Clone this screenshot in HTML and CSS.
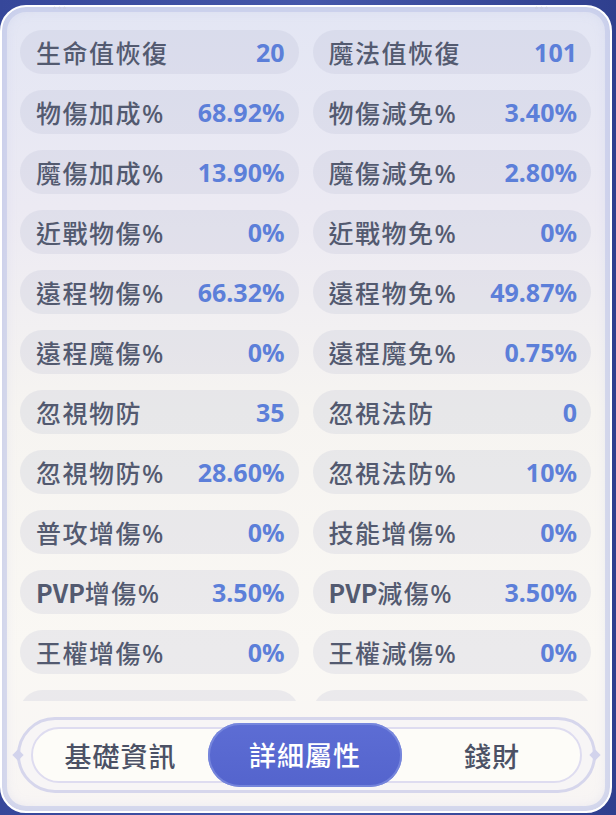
FILE: index.html
```html
<!DOCTYPE html>
<html lang="zh-Hant">
<head>
<meta charset="utf-8">
<link rel="stylesheet" href="styles.css">
</head>
<body>
<div class="panel">
  <span class="dots dots-left"></span>
  <span class="dots dots-right"></span>
  <div class="stats">
    <div class="row"><span class="lbl">生命值恢復</span><span class="val">20</span></div>
    <div class="row"><span class="lbl">魔法值恢復</span><span class="val">101</span></div>
    <div class="row"><span class="lbl">物傷加成<i>%</i></span><span class="val">68.92%</span></div>
    <div class="row"><span class="lbl">物傷減免<i>%</i></span><span class="val">3.40%</span></div>
    <div class="row"><span class="lbl">魔傷加成<i>%</i></span><span class="val">13.90%</span></div>
    <div class="row"><span class="lbl">魔傷減免<i>%</i></span><span class="val">2.80%</span></div>
    <div class="row"><span class="lbl">近戰物傷<i>%</i></span><span class="val">0%</span></div>
    <div class="row"><span class="lbl">近戰物免<i>%</i></span><span class="val">0%</span></div>
    <div class="row"><span class="lbl">遠程物傷<i>%</i></span><span class="val">66.32%</span></div>
    <div class="row"><span class="lbl">遠程物免<i>%</i></span><span class="val">49.87%</span></div>
    <div class="row"><span class="lbl">遠程魔傷<i>%</i></span><span class="val">0%</span></div>
    <div class="row"><span class="lbl">遠程魔免<i>%</i></span><span class="val">0.75%</span></div>
    <div class="row"><span class="lbl">忽視物防</span><span class="val">35</span></div>
    <div class="row"><span class="lbl">忽視法防</span><span class="val">0</span></div>
    <div class="row"><span class="lbl">忽視物防<i>%</i></span><span class="val">28.60%</span></div>
    <div class="row"><span class="lbl">忽視法防<i>%</i></span><span class="val">10%</span></div>
    <div class="row"><span class="lbl">普攻增傷<i>%</i></span><span class="val">0%</span></div>
    <div class="row"><span class="lbl">技能增傷<i>%</i></span><span class="val">0%</span></div>
    <div class="row"><span class="lbl"><b>PVP</b>增傷<i>%</i></span><span class="val">3.50%</span></div>
    <div class="row"><span class="lbl"><b>PVP</b>減傷<i>%</i></span><span class="val">3.50%</span></div>
    <div class="row"><span class="lbl">王權增傷<i>%</i></span><span class="val">0%</span></div>
    <div class="row"><span class="lbl">王權減傷<i>%</i></span><span class="val">0%</span></div>
    <div class="row"><span class="lbl">正義增傷<i>%</i></span><span class="val">0%</span></div>
    <div class="row"><span class="lbl">念力減傷<i>%</i></span><span class="val">0%</span></div>
  </div>
  <div class="tabbar">
    <span class="gem gem-left"></span>
    <span class="gem gem-right"></span>
    <div class="track">
      <div class="tab">基礎資訊</div>
      <div class="tab active">詳細屬性</div>
      <div class="tab">錢財</div>
    </div>
  </div>
</div>
</body>
</html>
```

FILE: styles.css
```css
* { box-sizing: border-box; }
html, body {
  margin: 0;
  padding: 0;
}
body {
  width: 616px;
  height: 815px;
  overflow: hidden;
  background: linear-gradient(90deg, #36479a 0%, #4557aa 50%, #2f3f8e 100%);
  padding: 5px 4px 2px 0;
  font-family: "Noto Sans CJK TC", "Noto Sans", sans-serif;
}
.panel {
  position: relative;
  height: 808px;
  border: 2px solid #ffffff;
  border-radius: 26px;
  background: linear-gradient(180deg, #e3e6f4 0%, #eceaf3 25%, #f6f4f1 50%, #faf8f4 80%, #f8f5f4 100%);
  box-shadow: inset 0 0 0 5px rgba(190, 197, 232, 0.55), inset 0 0 14px rgba(170, 178, 225, 0.35);
  padding: 23px 19px 0 18px;
  display: flex;
  flex-direction: column;
}
.dots {
  position: absolute;
  top: -1px;
  width: 14px;
  height: 4px;
  background: radial-gradient(circle, #c9cde3 1.2px, transparent 1.6px) 0 0 / 5px 4px repeat-x;
}
.dots-left { left: 50px; }
.dots-right { right: 62px; }
.stats {
  height: 671px;
  overflow: hidden;
  display: grid;
  grid-template-columns: 1fr 1fr;
  column-gap: 14px;
  row-gap: 16px;
  align-content: start;
  flex: none;
}
.row {
  height: 44px;
  border-radius: 22px;
  background: rgba(175, 180, 205, 0.2);
  display: flex;
  align-items: center;
  justify-content: space-between;
  padding: 0 14px 0 16px;
}
.lbl {
  font-family: "Noto Sans CJK TC", sans-serif;
  font-size: 25px;
  font-weight: 500;
  letter-spacing: 1.5px;
  color: #535a70;
  white-space: nowrap;
}
.lbl i {
  font-style: normal;
  font-family: "Noto Sans", sans-serif;
  font-size: 25px;
  font-weight: 500;
  letter-spacing: 0;
}
.lbl b { font-weight: 700; letter-spacing: 0; }
.val {
  font-family: "Noto Sans", "Open Sans", sans-serif;
  font-size: 25px;
  font-weight: 700;
  color: #5c7fd9;
  white-space: nowrap;
}
.tabbar {
  position: relative;
  margin: 16px -5px 0 -3px;
  height: 76px;
  border: 3px solid #d6d6ec;
  border-radius: 38px;
  background: #f7f5f6;
  padding: 7px 11px;
}
.gem {
  position: absolute;
  top: 31px;
  width: 8px;
  height: 8px;
  background: #d2d3ec;
  transform: rotate(45deg);
}
.gem-left { left: -6px; }
.gem-right { right: -6px; }
.track {
  height: 56px;
  border: 2px solid #dedcf0;
  border-radius: 28px;
  background: #fdfcf8;
  display: flex;
  align-items: center;
}
.tab {
  width: 176px;
  text-align: center;
  font-size: 27px;
  font-weight: 500;
  letter-spacing: 1px;
  color: #4b5165;
  flex: none;
}
.tab:first-child { width: 175px; }
.tab.active {
  width: 194px;
  height: 64px;
  line-height: 64px;
  border-radius: 32px;
  background: linear-gradient(180deg, #5d6dd4 0%, #5464cd 100%);
  box-shadow: inset 0 0 0 2px rgba(130, 145, 225, 0.7);
  color: #ffffff;
}
.tab:last-child { width: 180px; }
```
